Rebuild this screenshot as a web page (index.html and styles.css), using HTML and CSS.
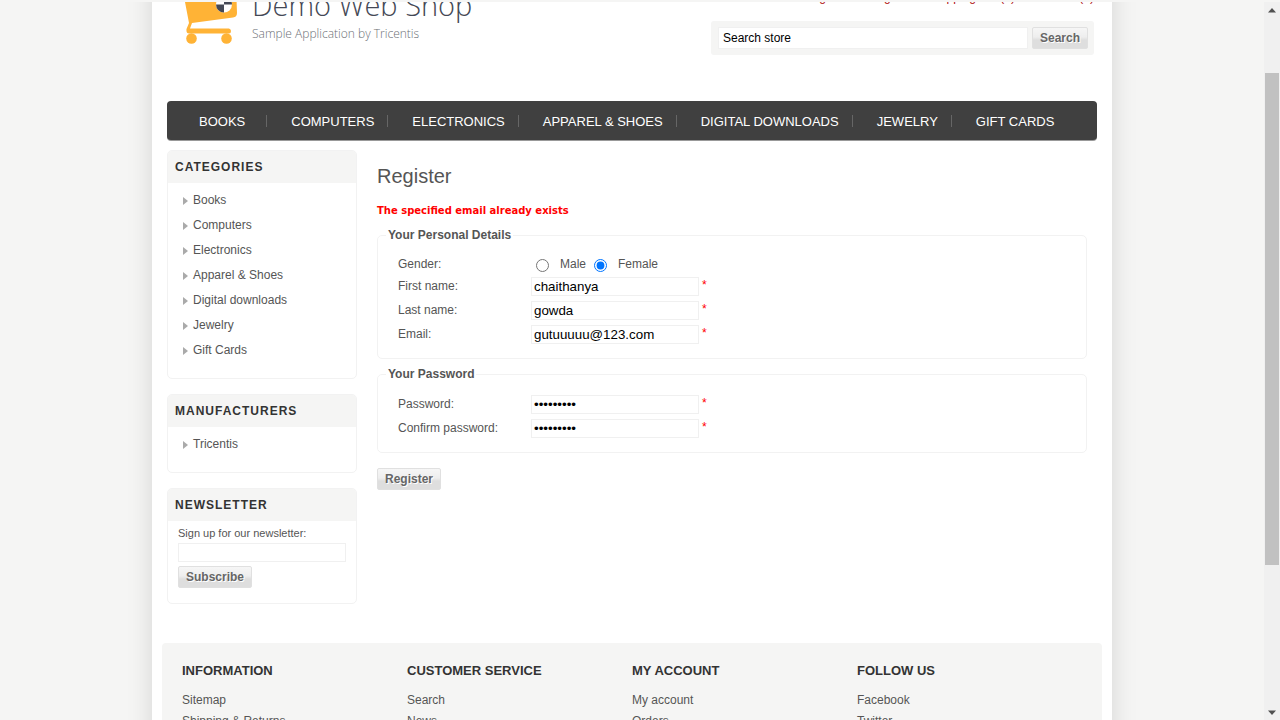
FILE: index.html
```html
<!DOCTYPE html>
<html lang="en">
<head>
<meta charset="utf-8">
<title>Demo Web Shop. Register</title>
<link rel="stylesheet" href="styles.css">
</head>
<body>
<div class="window">
  <div class="viewport">
    <div class="page">
      <header class="header">
        <a class="logo" href="#">
          <svg class="logo-cart" width="56" height="74" viewBox="0 0 56 74" aria-hidden="true">
            <path d="M0 14 L53 14 L54 43 Q54 47 50 47.500 L9 53 L7 58.500 H46 Q48 59 48 61 Q48 63.500 46 63.500 H6 Q3 63.500 3.500 59 L6 53 L2 32 Z" fill="#ffb336"/>
            <circle cx="8.500" cy="68.500" r="5.300" fill="#ffb336"/>
            <circle cx="43.500" cy="68.500" r="5.300" fill="#ffb336"/>
            <circle cx="41" cy="34.500" r="8" fill="#fff"/>
            <path d="M41 34.500 H33 A8 8 0 0 0 41 42.500 Z M41 34.500 V26.500 A8 8 0 0 1 49 34.500 Z" fill="#444855"/>
          </svg>
          <span class="logo-text">
            <span class="logo-name">Demo Web Shop</span>
            <span class="logo-tagline">Sample Application by Tricentis</span>
          </span>
        </a>
        <div class="header-tools">
          <ul class="header-links">
            <li><a href="#">Register</a></li>
            <li><a href="#">Log in</a></li>
            <li><a href="#"><span>Shopping cart</span><span>(0)</span></a></li>
            <li><a href="#"><span>Wishlist</span><span>(0)</span></a></li>
          </ul>
          <form class="search">
            <input class="search-input" type="text" value="Search store" aria-label="Search store">
            <button class="button" type="button">Search</button>
          </form>
        </div>
      </header>

      <nav class="menu">
        <ul>
          <li><a href="#">BOOKS</a></li>
          <li><a href="#">COMPUTERS</a></li>
          <li><a href="#">ELECTRONICS</a></li>
          <li><a href="#">APPAREL &amp; SHOES</a></li>
          <li><a href="#">DIGITAL DOWNLOADS</a></li>
          <li><a href="#">JEWELRY</a></li>
          <li><a href="#">GIFT CARDS</a></li>
        </ul>
      </nav>

      <div class="columns">
        <aside class="sidebar">
          <section class="block">
            <h2>CATEGORIES</h2>
            <ul class="block-list">
              <li><a href="#">Books</a></li>
              <li><a href="#">Computers</a></li>
              <li><a href="#">Electronics</a></li>
              <li><a href="#">Apparel &amp; Shoes</a></li>
              <li><a href="#">Digital downloads</a></li>
              <li><a href="#">Jewelry</a></li>
              <li><a href="#">Gift Cards</a></li>
            </ul>
          </section>
          <section class="block">
            <h2>MANUFACTURERS</h2>
            <ul class="block-list">
              <li><a href="#">Tricentis</a></li>
            </ul>
          </section>
          <section class="block">
            <h2>NEWSLETTER</h2>
            <form class="newsletter">
              <label for="newsletter-email">Sign up for our newsletter:</label>
              <input class="field" id="newsletter-email" type="text">
              <button class="button" type="button">Subscribe</button>
            </form>
          </section>
        </aside>

        <main class="content">
          <h1>Register</h1>
          <p class="error">The specified email already exists</p>
          <form>
            <fieldset>
              <legend>Your Personal Details</legend>
              <div class="row row-gender">
                <span class="row-label">Gender:</span>
                <span class="choices">
                  <input type="radio" name="gender" id="male"><label for="male">Male</label>
                  <input type="radio" name="gender" id="female" checked><label for="female">Female</label>
                </span>
              </div>
              <div class="row">
                <label class="row-label" for="first">First name:</label>
                <input class="field" id="first" type="text" value="chaithanya"><span class="required">*</span>
              </div>
              <div class="row">
                <label class="row-label" for="last">Last name:</label>
                <input class="field" id="last" type="text" value="gowda"><span class="required">*</span>
              </div>
              <div class="row">
                <label class="row-label" for="email">Email:</label>
                <input class="field" id="email" type="text" value="gutuuuuu@123.com"><span class="required">*</span>
              </div>
            </fieldset>
            <fieldset>
              <legend>Your Password</legend>
              <div class="row">
                <label class="row-label" for="password">Password:</label>
                <input class="field" id="password" type="password" value="gowda1234"><span class="required">*</span>
              </div>
              <div class="row">
                <label class="row-label" for="confirm">Confirm password:</label>
                <input class="field" id="confirm" type="password" value="gowda1234"><span class="required">*</span>
              </div>
            </fieldset>
            <button class="button" type="button">Register</button>
          </form>
        </main>
      </div>

      <footer class="footer">
        <section>
          <h3>INFORMATION</h3>
          <ul>
            <li><a href="#">Sitemap</a></li>
            <li><a href="#">Shipping &amp; Returns</a></li>
          </ul>
        </section>
        <section>
          <h3>CUSTOMER SERVICE</h3>
          <ul>
            <li><a href="#">Search</a></li>
            <li><a href="#">News</a></li>
          </ul>
        </section>
        <section>
          <h3>MY ACCOUNT</h3>
          <ul>
            <li><a href="#">My account</a></li>
            <li><a href="#">Orders</a></li>
          </ul>
        </section>
        <section>
          <h3>FOLLOW US</h3>
          <ul>
            <li><a href="#">Facebook</a></li>
            <li><a href="#">Twitter</a></li>
          </ul>
        </section>
      </footer>
    </div>
  </div>
  <div class="scrollbar" aria-hidden="true">
    <svg width="8" height="5" viewBox="0 0 8 5"><path d="M4 0 L8 4.500 H0 Z" fill="#505050"/></svg>
    <div class="scroll-track"><div class="scroll-thumb"></div></div>
    <svg width="8" height="5" viewBox="0 0 8 5"><path d="M0 0.500 H8 L4 5 Z" fill="#505050"/></svg>
  </div>
</div>
</body>
</html>
```
FILE: styles.css
```css
* { box-sizing: border-box; }

body {
  margin: 0;
  background: #f5f5f4;
  color: #555;
  font: 12px/14px "Liberation Sans", Arial, sans-serif;
}

ul { list-style: none; margin: 0; padding: 0; }
a { color: inherit; text-decoration: none; }
h1, h2, h3, p { margin: 0; }

.window {
  display: flex;
  height: 100vh;
  padding-top: 2px;
}

.viewport { flex: 1; overflow: hidden; }

.page {
  max-width: 960px;
  margin: -30px auto 0;
  padding: 18px 10px 0;
  background: #fff;
  box-shadow: 0 0 24px rgba(0, 0, 0, 0.13);
}

.header {
  display: flex;
  justify-content: space-between;
  align-items: flex-start;
  padding: 0 8px 0 21px;
}

.logo { display: flex; gap: 13px; margin-top: -20px; }
.logo-text { display: flex; flex-direction: column; padding-top: 15px; }
.logo-name {
  color: #444855;
  font: 300 29px/40px "Open Sans", sans-serif;
}
.logo-tagline {
  color: #6c6f76;
  font: 300 12px/18px "Open Sans", sans-serif;
}

.header-tools { width: 383px; }

.header-links {
  display: flex;
  justify-content: flex-end;
  gap: 22px;
  color: #b01010;
}
.header-links a { display: flex; gap: 1px; }

.search {
  display: flex;
  gap: 4px;
  margin-top: 17px;
  padding: 6px 6px 6px 7px;
  border-radius: 3px;
  background: #f5f5f4;
}
.search-input {
  flex: 1;
  min-width: 0;
  height: 22px;
  padding: 0 4px;
  border: 1px solid #f0f0f0;
  background: #fff;
  color: #000;
  font: 12px "Liberation Sans", Arial, sans-serif;
}

.button {
  height: 22px;
  padding: 0 7px;
  border: 1px solid #e0e0e0;
  border-radius: 2px;
  background: linear-gradient(#f6f6f6 0%, #eee 45%, #dedede 60%, #dedede 100%);
  color: #666;
  font: bold 12px/18px "Liberation Sans", Arial, sans-serif;
  text-shadow: 1px 1px 0 #fff;
}

.menu {
  margin: 46px 5px 0;
  padding: 0 32px;
  border-radius: 4px;
  background: #404040;
  box-shadow: 0 1px 0 #999;
}
.menu ul { display: flex; align-items: center; height: 39px; }
.menu li {
  height: 12px;
  padding: 0 13px 0 24px;
  border-right: 1px solid #666;
  line-height: 14px;
  white-space: nowrap;
}
.menu li:first-child { padding: 0 21px 0 0; }
.menu li:last-child { padding-right: 0; border: 0; }
.menu a { color: #fff; font-size: 13px; }

.columns {
  display: grid;
  grid-template-columns: 190px 1fr;
  gap: 20px;
  padding: 10px 15px 0 5px;
}

.sidebar { display: flex; flex-direction: column; gap: 15px; }

.block {
  border: 1px solid #f2f2f2;
  border-radius: 5px;
  overflow: hidden;
}
.block h2 {
  padding: 0 7px;
  background: #f5f5f4;
  color: #333;
  font-size: 12px;
  line-height: 32px;
  letter-spacing: 1px;
}
.block-list { padding: 5px 15px 15px; }
.block-list li {
  display: flex;
  align-items: center;
  gap: 5px;
  line-height: 25px;
}
.block-list li::before {
  content: "";
  border: 4px solid transparent;
  border-left: 5px solid #aaa;
  border-right: 0;
}

.newsletter { padding: 5px 10px 15px; font-size: 11px; }
.newsletter label { display: block; margin-bottom: 3px; }
.newsletter .field { display: block; margin-bottom: 4px; }

.field {
  width: 168px;
  height: 19px;
  padding: 0 2px;
  border: 1px solid #f0f0f0;
  background: #fff;
  color: #000;
  font-family: "Liberation Sans", Arial, sans-serif;
}

.content h1 {
  padding: 14px 0 17px;
  font-size: 20px;
  font-weight: normal;
  line-height: 24px;
}

.error {
  margin-bottom: 11px;
  color: #f00;
  font: bold 10px/12px "DejaVu Sans", Verdana, sans-serif;
}

fieldset {
  margin: 0 0 8px;
  padding: 11px 20px 12px;
  border: 1px solid #f2f2f2;
  border-radius: 5px;
}
fieldset + .button { margin-top: 7px; }
legend { margin-left: -12px; padding: 0 2px; font-weight: bold; }

.row {
  display: flex;
  align-items: center;
  height: 24px;
}
.row-gender { height: 21px; }
.row-label { width: 133px; }
.choices { display: flex; align-items: center; }
.choices input { width: 13px; height: 13px; margin: 3px 11px 0 5px; }
.choices label + input { margin-left: 8px; }
.required { align-self: flex-start; margin: 4px 0 0 3px; color: #f00; }

.footer {
  display: grid;
  grid-template-columns: repeat(4, 1fr);
  margin-top: 39px;
  padding: 20px 20px 60px;
  border-radius: 4px 4px 0 0;
  background: #f5f5f4;
}
.footer h3 {
  margin-bottom: 11px;
  color: #333;
  font-size: 13px;
  line-height: 16px;
}
.footer li { line-height: 21px; }

.scrollbar {
  display: flex;
  flex-direction: column;
  align-items: center;
  gap: 6px;
  width: 16px;
  padding: 6px 0 5px;
  background: #f0f0f0;
}
.scroll-track { flex: 1; width: 14px; padding-top: 54px; }
.scroll-thumb { height: 78%; background: #c1c1c1; }
```
